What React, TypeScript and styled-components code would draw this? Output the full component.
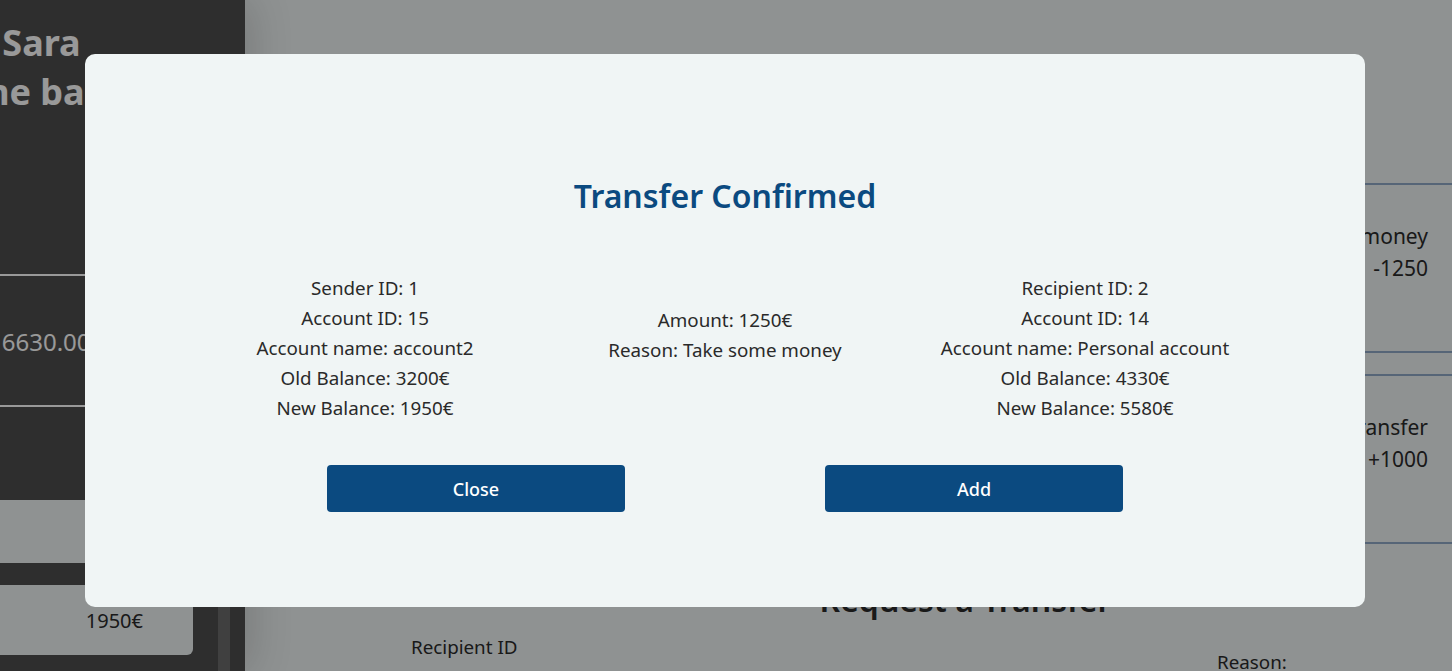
import React from "react";
import styled, { createGlobalStyle } from "styled-components";

const GlobalStyle = createGlobalStyle`
  html, body {
    margin: 0;
    padding: 0;
    height: 100%;
    overflow: hidden;
  }
  body {
    font-family: "Noto Sans", "DejaVu Sans", sans-serif;
    color: #2b2b2b;
  }
  #root {
    height: 100%;
  }
`;

const Page = styled.div`
  display: flex;
  height: 100vh;
  background: #eef3f3;
`;

const Sidebar = styled.aside`
  position: relative;
  z-index: 1;
  width: 245px;
  flex-shrink: 0;
  background: #4e4e4e;
  color: #fff;
  display: flex;
  flex-direction: column;
  overflow: hidden;
  box-shadow: 6px 0 40px rgba(0, 0, 0, 0.16);
`;

const Greeting = styled.h2<{ $shift: number }>`
  margin: 0 0 0 ${(p) => p.$shift}px;
  font-size: 36px;
  font-weight: 700;
  line-height: 49px;
  white-space: nowrap;
`;

const GreetingBlock = styled.div`
  padding-top: 18px;
`;

const Divider = styled.hr<{ $top: number }>`
  margin: ${(p) => p.$top}px 0 0;
  border: none;
  height: 2px;
  background: #fff;
`;

const Balance = styled.div`
  padding: 50px 0 47px;
  margin-left: -12px;
  font-size: 24px;
  line-height: 32px;
  white-space: nowrap;
`;

const AccountArea = styled.div`
  display: flex;
  gap: 25px;
  margin-top: 93px;
  flex: 1;
`;

const AccountList = styled.div`
  width: 193px;
  display: flex;
  flex-direction: column;
  gap: 22px;
`;

const AddAccount = styled.div`
  height: 63px;
  background: #eef3f3;
  margin-right: -52px;
  display: flex;
  align-items: center;
  justify-content: center;
  color: #2b2b2b;
  font-size: 22px;
`;

const AccountCard = styled.div`
  height: 70px;
  background: #eef3f3;
  border-radius: 0 0 6px 0;
  display: flex;
  align-items: center;
  justify-content: flex-end;
  padding-right: 50px;
  color: #2b2b2b;
  font-size: 20px;
`;

const ScrollTrack = styled.div`
  width: 12px;
  margin-top: 85px;
  background: #6b6b6b;
`;

const Main = styled.main`
  flex: 1;
  display: flex;
  flex-direction: column;
  overflow: hidden;
`;

const TopRow = styled.div`
  display: flex;
  justify-content: flex-end;
  padding-top: 183px;
`;

const TxList = styled.div`
  width: 420px;
  display: flex;
  flex-direction: column;
  gap: 21px;
`;

const TxCard = styled.div`
  box-sizing: border-box;
  height: 170px;
  border-top: 2px solid #8fa8c6;
  border-bottom: 2px solid #8fa8c6;
  padding: 35px 24px 0;
  text-align: right;
  font-size: 21px;
  line-height: 32px;
`;

const SectionTitle = styled.h2`
  margin: 36px 0 0;
  padding-left: 234px;
  text-align: center;
  font-size: 32px;
  font-weight: 600;
  line-height: 40px;
`;

const FormRow = styled.div`
  display: grid;
  grid-template-columns: 806px 1fr;
  padding-left: 166px;
`;

const FieldLabel = styled.label<{ $offset: number }>`
  margin-top: ${(p) => p.$offset}px;
  font-size: 18.8px;
  line-height: 24px;
`;

const Overlay = styled.div`
  position: fixed;
  inset: 0;
  z-index: 10;
  background: rgba(0, 0, 0, 0.4);
  display: flex;
  justify-content: center;
  align-items: flex-start;
  padding: 54px 2px 0 0;
`;

const Modal = styled.div`
  width: 1280px;
  box-sizing: border-box;
  padding: 122px 0 95px;
  background: #f0f5f5;
  border-radius: 10px;
  display: flex;
  flex-direction: column;
`;

const ModalTitle = styled.h1`
  margin: 0;
  text-align: center;
  color: #0b4a80;
  font-size: 32px;
  font-weight: 600;
  line-height: 40px;
`;

const Details = styled.div`
  display: grid;
  grid-template-columns: repeat(3, 360px);
  justify-content: center;
  align-items: start;
  margin-top: 57px;
`;

const DetailColumn = styled.div<{ $offset?: number }>`
  margin-top: ${(p) => p.$offset ?? 0}px;
  text-align: center;
  font-size: 18.8px;
  line-height: 30px;
  color: #2a2a2a;
  white-space: nowrap;
`;

const Actions = styled.div`
  display: flex;
  justify-content: center;
  gap: 200px;
  margin-top: 42px;
`;

const ActionButton = styled.button`
  width: 298px;
  height: 47px;
  border: none;
  border-radius: 4px;
  background: #0b4a80;
  color: #fff;
  font-family: "Noto Sans", sans-serif;
  font-size: 18px;
  font-weight: 500;
  cursor: pointer;
`;

const sender = [
  "Sender ID: 1",
  "Account ID: 15",
  "Account name: account2",
  "Old Balance: 3200€",
  "New Balance: 1950€",
];

const recipient = [
  "Recipient ID: 2",
  "Account ID: 14",
  "Account name: Personal account",
  "Old Balance: 4330€",
  "New Balance: 5580€",
];

const transactions = [
  { reason: "Take some money", amount: "-1250" },
  { reason: "Transfer", amount: "+1000" },
];

const App = () => {
  return (
    <>
      <GlobalStyle />
      <Page>
        <Sidebar>
          <GreetingBlock>
            <Greeting $shift={-100}>Hello Sara</Greeting>
            <Greeting $shift={-133}>Welcome back</Greeting>
          </GreetingBlock>
          <Divider $top={158} />
          <Balance>16630.00€</Balance>
          <Divider $top={0} />
          <AccountArea>
            <AccountList>
              <AddAccount>+</AddAccount>
              <AccountCard>1950€</AccountCard>
            </AccountList>
            <ScrollTrack />
          </AccountArea>
        </Sidebar>
        <Main>
          <TopRow>
            <TxList>
              {transactions.map((t) => (
                <TxCard key={t.reason}>
                  <div>{t.reason}</div>
                  <div>{t.amount}</div>
                </TxCard>
              ))}
            </TxList>
          </TopRow>
          <SectionTitle>Request a Transfer</SectionTitle>
          <FormRow>
            <FieldLabel $offset={15}>Recipient ID</FieldLabel>
            <FieldLabel $offset={30}>Reason:</FieldLabel>
          </FormRow>
        </Main>
      </Page>
      <Overlay>
        <Modal>
          <ModalTitle>Transfer Confirmed</ModalTitle>
          <Details>
            <DetailColumn>
              {sender.map((line) => (
                <div key={line}>{line}</div>
              ))}
            </DetailColumn>
            <DetailColumn $offset={32}>
              <div>Amount: 1250€</div>
              <div>Reason: Take some money</div>
            </DetailColumn>
            <DetailColumn>
              {recipient.map((line) => (
                <div key={line}>{line}</div>
              ))}
            </DetailColumn>
          </Details>
          <Actions>
            <ActionButton>Close</ActionButton>
            <ActionButton>Add</ActionButton>
          </Actions>
        </Modal>
      </Overlay>
    </>
  );
};

export default App;
